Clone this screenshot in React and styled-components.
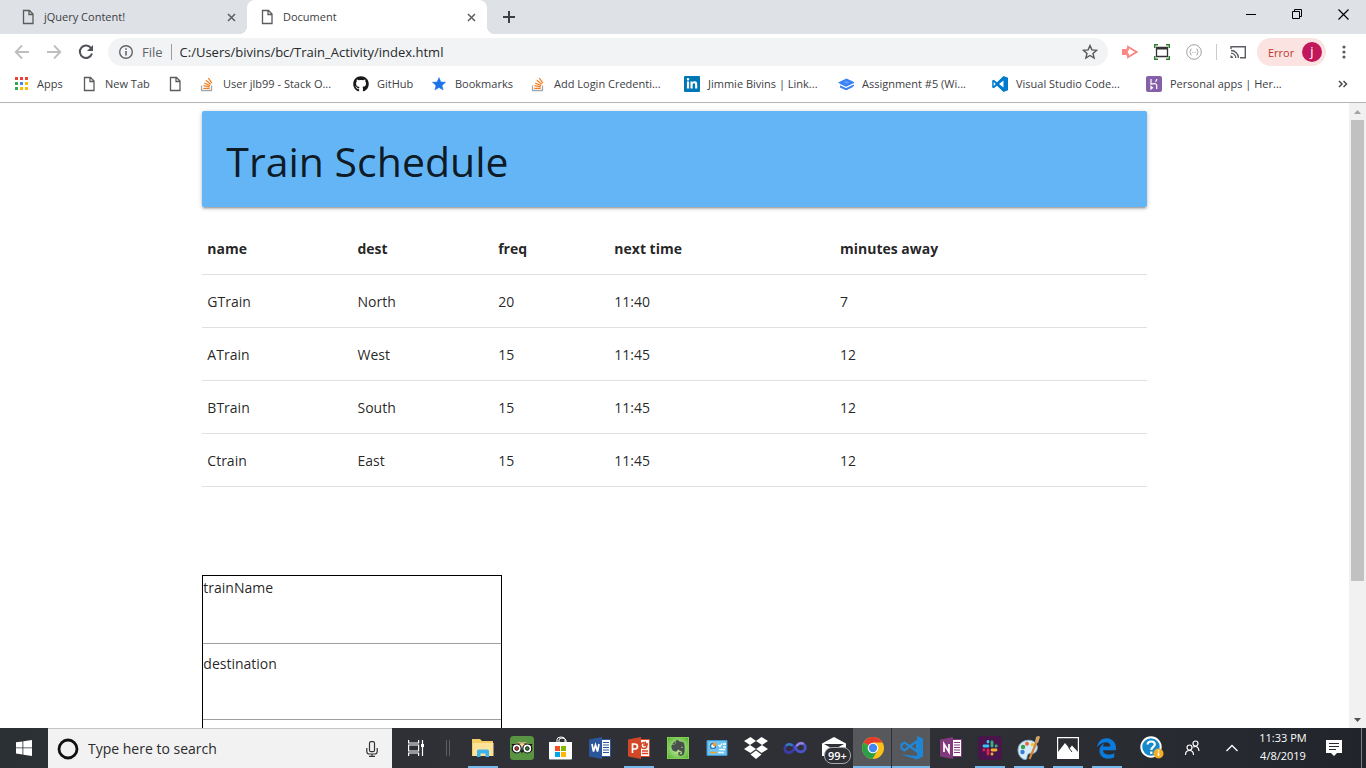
import React from "react";
import styled, { createGlobalStyle, css } from "styled-components";
import { FaGithub, FaLinkedinIn, FaEvernote } from "react-icons/fa";
import { FaEdgeLegacy } from "react-icons/fa6";

const GlobalStyle = createGlobalStyle`
  *, *::before, *::after { box-sizing: border-box; }
  body {
    margin: 0;
    font-family: "Open Sans", "Noto Sans", sans-serif;
    font-size: 11px;
    color: #3c4043;
    background: #fff;
  }
  button, input { font: inherit; color: inherit; margin: 0; }
  button { border: 0; padding: 0; background: none; }
  svg { display: block; flex: none; }
`;

const Screen = styled.div`
  display: flex;
  flex-direction: column;
  height: 100vh;
  overflow: hidden;
`;

/* ---------- tab strip ---------- */

const TabStrip = styled.div`
  display: flex;
  flex: none;
  height: 34px;
  background: #dee1e6;
`;

const Tab = styled.div`
  position: relative;
  display: flex;
  align-items: center;
  flex: 0 1 ${(p) => p.$width}px;
  padding: 0 8px 0 ${(p) => (p.$active ? 12 : 20)}px;
  gap: 8px;
  ${(p) =>
    p.$active &&
    css`
      background: #fff;
      border-radius: 8px 8px 0 0;
      &::before,
      &::after {
        content: "";
        position: absolute;
        bottom: 0;
        width: 8px;
        height: 8px;
      }
      &::before {
        left: -8px;
        background: radial-gradient(circle at 0 0, #dee1e6 8px, #fff 8px);
      }
      &::after {
        right: -8px;
        background: radial-gradient(circle at 100% 0, #dee1e6 8px, #fff 8px);
      }
    `}
`;

const TabTitle = styled.button`
  flex: 1;
  padding-bottom: 2px;
  text-align: left;
  white-space: nowrap;
`;

const IconButton = styled.button`
  display: flex;
  align-items: center;
  justify-content: center;
  flex: none;
  width: ${(p) => p.$width || 16}px;
  height: ${(p) => p.$height || 16}px;
`;

const WindowControls = styled.div`
  display: flex;
  margin-left: auto;
`;

/* ---------- toolbar ---------- */

const Toolbar = styled.div`
  display: flex;
  align-items: center;
  flex: none;
  height: 36px;
  padding: 0 10px 0 6px;
`;

const Omnibox = styled.div`
  display: flex;
  align-items: center;
  flex: 1;
  height: 28px;
  margin: 0 6px;
  padding: 0 10px;
  gap: 8px;
  border-radius: 14px;
  background: #f1f3f4;
  font-size: 13px;
  color: #5f6368;
`;

const UrlInput = styled.input`
  flex: 1;
  min-width: 0;
  padding: 0;
  border: 0;
  outline: 0;
  background: none;
  color: #27292c;
`;

const Divider = styled.span`
  flex: none;
  width: 1px;
  height: 16px;
  background: ${(p) => p.$color};
  margin: 0 ${(p) => p.$space || 0}px;
`;

const ProfilePill = styled.button`
  display: flex;
  align-items: center;
  justify-content: space-between;
  width: 69px;
  height: 28px;
  margin: 0 6px 0 4px;
  padding: 0 4px 0 11px;
  border-radius: 14px;
  background: #fae3e1;
  color: #c5362b;
`;

const Avatar = styled.span`
  width: 20px;
  height: 20px;
  border-radius: 50%;
  background: #c2185b;
  color: #fff;
  font-size: 13px;
  line-height: 18px;
`;

/* ---------- bookmarks ---------- */

const BookmarksBar = styled.nav`
  display: flex;
  align-items: center;
  flex: none;
  height: 33px;
  padding: 0 15px 4px 13px;
  border-bottom: 1px solid #b3b4b6;
`;

const Bookmark = styled.a`
  display: flex;
  align-items: center;
  gap: 8px;
  flex: 0 0 ${(p) => p.$width}px;
  height: 28px;
  color: #3c4043;
  text-decoration: none;
  white-space: nowrap;
`;

const BookmarkLabel = styled.span`
  padding-bottom: 2px;
`;

const MoreButton = styled(IconButton)`
  margin-left: auto;
`;

/* ---------- web page ---------- */

const Viewport = styled.div`
  display: flex;
  flex: 1;
  min-height: 0;
`;

const PageScroll = styled.div`
  flex: 1;
  overflow: hidden;
`;

const Container = styled.main`
  width: 70%;
  max-width: 1280px;
  margin: 0 auto;
  color: rgba(0, 0, 0, 0.87);
  font-size: 14px;
  line-height: 22px;
`;

const Banner = styled.header`
  margin: 8px 0 15px;
  padding: 24px 24px 20px;
  border-radius: 2px;
  background: #64b5f6;
  box-shadow: 0 2px 2px 0 rgba(0, 0, 0, 0.14), 0 3px 1px -2px rgba(0, 0, 0, 0.12),
    0 1px 5px 0 rgba(0, 0, 0, 0.2);
`;

const Title = styled.h1`
  margin: 0;
  font-size: 41px;
  line-height: 52px;
  font-weight: 400;
`;

const Schedule = styled.table`
  width: 100%;
  table-layout: fixed;
  border-collapse: collapse;
  margin-bottom: 88px;
`;

const Row = styled.tr`
  border-bottom: 1px solid rgba(0, 0, 0, 0.12);
`;

const HeadCell = styled.th`
  width: ${(p) => p.$width};
  padding: 16px 5px 14px;
  text-align: left;
  font-weight: 700;
`;

const Cell = styled.td`
  padding: 16px 5px 14px;
`;

const TrainForm = styled.form`
  width: 300px;
  border: 1px solid #000;
`;

const FieldLabel = styled.label`
  display: block;
  line-height: 24px;
`;

const FieldInput = styled.input`
  display: block;
  width: 100%;
  height: 44px;
  margin-bottom: 8px;
  border: 0;
  border-bottom: 1px solid #9e9e9e;
  outline: 0;
`;

const ScrollBar = styled.div`
  display: flex;
  flex-direction: column;
  align-items: center;
  width: 17px;
  background: #f1f1f1;
`;

const ScrollTrack = styled.div`
  display: flex;
  flex-direction: column;
  flex: 1;
`;

const ScrollThumb = styled.div`
  flex: 0 0 78%;
  width: 13px;
  background: #c1c1c1;
`;

/* ---------- taskbar ---------- */

const Taskbar = styled.footer`
  display: flex;
  align-items: stretch;
  flex: none;
  height: 40px;
  background: linear-gradient(90deg, #2b3035, #303136 40%, #2d2f34 75%, #21252b);
  color: #fff;
`;

const SearchBox = styled.label`
  display: flex;
  align-items: center;
  width: 344px;
  padding: 0 12px 0 8px;
  gap: 8px;
  border-top: 1px solid #c4c4c4;
  background: #f2f2f2;
  color: #2b2b2b;
`;

const SearchInput = styled.input`
  flex: 1;
  min-width: 0;
  padding: 0;
  border: 0;
  outline: 0;
  background: none;
  font-size: 14px;
  &::placeholder { color: #2b2b2b; opacity: 1; }
`;

const Apps = styled.div`
  display: flex;
  margin-left: 3px;
`;

const TaskButton = styled.button`
  display: flex;
  align-items: center;
  justify-content: center;
  position: relative;
  width: ${(p) => p.$width || 39}px;
  color: #fff;
  background: ${(p) => (p.$focused ? "#56585c" : "none")};
  box-shadow: ${(p) => (p.$focused ? "inset -1px 0 #303136" : "none")};
  &::after {
    content: "";
    display: ${(p) => (p.$running ? "block" : "none")};
    position: absolute;
    bottom: 0;
    left: ${(p) => (p.$focused ? 0 : 5)}px;
    right: ${(p) => (p.$focused ? 1 : 4)}px;
    height: 2px;
    background: #76b9ed;
  }
`;

const Tray = styled.div`
  display: flex;
  align-items: stretch;
  margin-left: auto;
  padding-right: 7px;
  border-right: 1px solid #7b7d80;
  margin-right: 4px;
`;

const Clock = styled.time`
  display: flex;
  flex-direction: column;
  justify-content: center;
  width: 62px;
  padding-bottom: 2px;
  text-align: center;
  line-height: 18px;
`;

const CountBadge = styled.span`
  position: absolute;
  left: 10px;
  top: 19px;
  padding: 0 3px;
  border: 1px solid #a5a7aa;
  border-radius: 8px;
  background: #303136;
  font-size: 11px;
  line-height: 15px;
  font-weight: 600;
`;

/* ---------- icons ---------- */

const Svg = ({ w = 16, h = w, box, children, ...rest }) => (
  <svg width={w} height={h} viewBox={box || `0 0 ${w} ${h}`} fill="none" aria-hidden="true" {...rest}>
    {children}
  </svg>
);

const PageIcon = () => (
  <Svg>
    <path d="M3.500 1.500h6l3.500 3.500v9.500h-9.500zM9 1.500v4h4" stroke="#5b5b5b" strokeWidth="1.300" />
  </Svg>
);
const CloseIcon = () => (
  <Svg w={9}><path d="M1 1l7 7M8 1L1 8" stroke="#5a5d61" strokeWidth="1.500" /></Svg>
);
const ArrowIcon = ({ flip }) => (
  <Svg transform={flip ? "scale(-1 1)" : undefined}>
    <path d="M15 8H2M8 1.500L1.700 8 8 14.500" stroke="#bcbec0" strokeWidth="1.800" />
  </Svg>
);
const ReloadIcon = () => (
  <Svg>
    <path d="M13.200 4.200A6.200 6.200 0 1 0 14 9.500" stroke="#505357" strokeWidth="2" />
    <path d="M15 1v6H9z" fill="#505357" />
  </Svg>
);
const InfoIcon = () => (
  <Svg>
    <circle cx="8" cy="8" r="6.300" stroke="#5f6368" strokeWidth="1.400" />
    <path d="M8 7v4.500M8 4.200v1.600" stroke="#5f6368" strokeWidth="1.600" />
  </Svg>
);
const StarIcon = ({ filled }) => (
  <Svg>
    <path
      d="M8 1.600l1.900 4.300 4.700.4-3.600 3.100 1.100 4.600L8 11.500 3.900 14 5 9.400 1.400 6.300l4.700-.4z"
      fill={filled ? "#1a73e8" : "none"}
      stroke={filled ? "#1a73e8" : "#55585c"}
      strokeWidth={filled ? 0.5 : 1.4}
    />
  </Svg>
);
const AppsIcon = () => {
  const colors = ["#ea4335", "#ea4335", "#ea4335", "#34a853", "#4285f4", "#fbbc05", "#34a853", "#fbbc05", "#fbbc05"];
  return (
    <Svg>
      {colors.map((c, i) => (
        <rect key={i} x={2 + (i % 3) * 5} y={1 + Math.floor(i / 3) * 5} width="3" height="3" fill={c} />
      ))}
    </Svg>
  );
};
const StackIcon = () => (
  <Svg>
    <path d="M2.500 9.500v5h10v-5" stroke="#a5a8ab" strokeWidth="1.300" />
    <path d="M4.300 12.300h6.400M4.400 9.700l6.300 1.200M5.200 7l5.800 2.700M6.800 4.300l4.900 4M9.300 2l3.600 5.200" stroke="#f48024" strokeWidth="1.300" />
  </Svg>
);
const LinkedInBox = styled.span`
  display: flex;
  align-items: center;
  justify-content: center;
  flex: none;
  width: 16px;
  height: 16px;
  border-radius: 1px;
  background: #0077b5;
  color: #fff;
`;
const LayersIcon = () => (
  <Svg>
    <path d="M0 6.500L8.500 2.500 16 6v4l-7.500 4L2 11V8z" fill="#3b82f6" />
    <path d="M0 7l8 3.700L16 7v1.500l-8 3.800L2 9.500z" fill="#fff" />
    <path d="M2 9.500l6 2.800 6.500-3v2L8 14.300 2 11.500z" fill="#3b82f6" />
    <path d="M5.500 6.300l3-1.300 3 1.300-3 1.500z" fill="#659df8" />
  </Svg>
);
const CodeIcon = () => (
  <Svg>
    <path d="M11.500 0L16 1.800v12.400L11.500 16 5 9.700 1.700 12.300.2 11.500V4.500l1.500-.8L5 6.300zM11.500 4.500L7 8l4.500 3.500zM1.700 6v4l2-2z" fill="#007acc" fillRule="evenodd" />
  </Svg>
);
const HerokuIcon = () => (
  <Svg>
    <rect width="16" height="16" rx="2" fill="#8560a8" />
    <path d="M5 3v5.300c2-.8 5.700-1.400 5.700 1V13M10.700 3c0 1-.5 2-1.200 2.800M5 10.500V13l1.500-1.300z" stroke="#fff" strokeWidth="1.200" />
  </Svg>
);
const PlayExtIcon = () => (
  <Svg>
    <path d="M0 5h4v6H0z" fill="#f98683" />
    <path d="M6 2.800L14.500 8 6 13.200V10.500H5V5.500h1z" stroke="#f98683" strokeWidth="1.800" />
  </Svg>
);
const CaptureIcon = () => (
  <Svg>
    <path d="M.7 4V.7H4M12 .7h3.300V4M15.300 12v3.300H12M4 15.300H.7V12" stroke="#2e8030" strokeWidth="1.500" />
    <path d="M2.500 3.500h11v9h-11z" stroke="#333" strokeWidth="1.300" />
    <path d="M2 3h12v2.500H2z" fill="#333" />
  </Svg>
);
const BracesIcon = () => (
  <Svg>
    <circle cx="8" cy="8" r="7.300" stroke="#a2a2a2" />
    <path d="M5.500 5c-1.500 0-.3 2.500-1.800 3 1.500.5.3 3 1.800 3M10.500 5c1.500 0 .3 2.500 1.800 3-1.500.5-.3 3-1.800 3M6.500 8.500h.8M8.700 8.500h.8" stroke="#999" />
  </Svg>
);
const CastIcon = () => (
  <Svg>
    <path d="M1 5V2.700h14.300v11H10" stroke="#5a5d61" strokeWidth="1.400" />
    <path d="M1 6.500A7.500 7.500 0 0 1 8.500 14M1 9.200A4.800 4.800 0 0 1 5.800 14" stroke="#5a5d61" strokeWidth="1.300" />
    <path d="M.5 11.500A2.500 2.500 0 0 1 3 14H.5z" fill="#5a5d61" />
  </Svg>
);
const DotsIcon = () => (
  <Svg>
    {[3, 8, 13].map((y) => <circle key={y} cx="8" cy={y} r="1.600" fill="#5a5d61" />)}
  </Svg>
);

const StartIcon = () => (
  <Svg>
    <path d="M0 2.300L6.500 1.400v6.100H0zM7.300 1.300L16 0v7.500H7.300zM0 8.300h6.500v6.200L0 13.600zM7.300 8.300H16V16l-8.700-1.300z" fill="#fff" />
  </Svg>
);
const CortanaIcon = () => (
  <Svg w={24}><circle cx="12" cy="12" r="9" stroke="#111" strokeWidth="2.800" /></Svg>
);
const MicIcon = () => (
  <Svg>
    <rect x="5.500" y=".7" width="5" height="10" rx="1.500" stroke="#333" strokeWidth="1.200" />
    <path d="M2.800 7v3.500q0 2.500 2.500 2.500h5.400q2.500 0 2.500-2.500V7M8 13v2.400M5 15.400h6" stroke="#333" strokeWidth="1.200" />
  </Svg>
);
const TaskViewIcon = () => (
  <Svg>
    <path d="M.6 0v3h10V0M.6 16v-3h10v3M.6 5h10v6H.6zM14.500 0v16" stroke="#fff" strokeWidth="1.200" />
    <path d="M13 4h3v3h-3z" fill="#fff" />
  </Svg>
);
const ExplorerIcon = () => (
  <Svg w={22}>
    <path d="M0 2h8l2 2h11v15H0z" fill="#f6cf63" />
    <path d="M1 6h20.500v13H1z" fill="#fde29a" />
    <path d="M5 20v-6q0-1.500 1.500-1.500h9q1.500 0 1.500 1.500v6h-3.500v-3.500h-5V20z" fill="#3cb3ec" />
  </Svg>
);
const OwlIcon = () => (
  <Svg w={24}>
    <rect width="24" height="24" rx="3.500" fill="#589442" />
    <path d="M4 8q8-4 16 0l-1 8-7-3-7 3z" fill="#f1d69b" />
    <path d="M1.500 8h5Q12 5.500 17.500 8h5L21 10.500 12 9l-9 1.500z" fill="#111" />
    <path d="M6 8.500q6-3 12 0l-6 3z" fill="#f1d69b" />
    {[6.700, 17.300].map((x, i) => (
      <g key={x}>
        <circle cx={x} cy="12.500" r="4.500" fill="#fff" stroke="#111" strokeWidth="1.200" />
        <circle cx={x} cy="12.500" r="1.800" fill={i ? "#318035" : "#d53c3c"} stroke="#111" />
      </g>
    ))}
    <path d="M10.500 14.500h3L12 17.500z" fill="#111" />
  </Svg>
);
const StoreIcon = () => (
  <Svg w={24}>
    <path d="M8 6V3.500Q8 1 12 1t4 2.500V6M10 6V4q0-2 3-2t4 2v2" stroke="#fff" />
    <path d="M0 6h23v16.500q0 1-1 1H1q-1 0-1-1z" fill="#fff" />
    <path d="M6 10h5v5H6z" fill="#f25022" /><path d="M12 10h5v5h-5z" fill="#7fba00" />
    <path d="M6 16h5v5H6z" fill="#00a4ef" /><path d="M12 16h5v5h-5z" fill="#ffb900" />
  </Svg>
);
const OfficeIcon = ({ color, mark, chart }) => (
  <Svg w={22}>
    <path d="M11 2.500h10.500v17H11z" fill="#fff" stroke={color} />
    {chart ? (
      <path d="M16 5.500a3 3 0 1 0 3 3h-3zM17.500 4.500V7H20M14 14h6M14 16.500h6" stroke={color} strokeWidth="1.300" />
    ) : (
      <path d="M14 5.500h6M14 8h6M14 10.500h6M14 13h6M14 15.500h6" stroke={color} strokeWidth="1.200" />
    )}
    <path d="M0 2.500L13 0v22L0 19.500z" fill={color} />
    <path d={mark} stroke="#fff" strokeWidth="1.700" />
  </Svg>
);
const EvernoteTile = styled.span`
  display: flex;
  align-items: center;
  justify-content: center;
  width: 22px;
  height: 22px;
  background: radial-gradient(#d6f5b4, #55b22f);
  border: 1px solid #83d050;
  color: #4a504c;
`;
const PanelIcon = () => (
  <Svg w={22}>
    <path d="M1 3.500h20v15H1z" fill="#6cc4f2" stroke="#3e94cd" />
    <circle cx="7" cy="9" r="3.700" fill="#fff" />
    <circle cx="7" cy="9" r="2.700" stroke="#287fc4" strokeWidth="1.700" />
    <path d="M7 9V5.300A3.700 3.700 0 0 1 10.700 9z" fill="#f39b26" />
    <path d="M12.500 8l1.500 1.500 2-3M17 7h3M17 10h3M13 12.500h6" stroke="#fff" strokeWidth="1.300" />
    <path d="M4 15.500h7" stroke="#f0a62e" strokeWidth="1.500" /><path d="M12 15.500h6" stroke="#e9f7ff" strokeWidth="1.500" />
  </Svg>
);
const DropboxIcon = () => (
  <Svg w={24}>
    <path d="M6.500 1L12 5 6 9 0 5zM17.500 1L24 5l-6 4-6-4zM0 13l6-4 6 4-5.500 4zM18 9l6 4-6.500 4-5.500-4zM6.500 18.500L12 14.500l5.500 4L12 23z" fill="#fff" />
  </Svg>
);
const InfinityIcon = () => (
  <Svg w={24}>
    <path d="M12 12c-3-4-5.500-4.500-8-3S1 14.500 3.500 16s5.500.5 8.500-4" stroke="#403aa8" strokeWidth="2.800" />
    <path d="M12 12c3-4.500 6-5.500 8.500-4s2.500 5.500 0 7-5.500 1-8.500-3" stroke="#4b54c9" strokeWidth="2.800" />
    <path d="M13.500 10c2.500-3 5-3.500 7-2" stroke="#9b84dc" strokeWidth="2.200" />
    <path d="M3 9.800c2-2 4.500-1.800 6.500-.3" stroke="#2f7fb8" strokeWidth="2.200" />
  </Svg>
);
const MailIcon = () => (
  <Svg w={24}>
    <path d="M0 7.500L12 1l12 6.500V20H0z" fill="#fff" />
    <path d="M2 8h20l-10 5.500z" fill="#303136" />
  </Svg>
);
const ChromeIcon = () => (
  <Svg w={22}>
    <circle cx="11" cy="11" r="11" fill="#fbc116" />
    <path d="M11 11L1.500 5.500A11 11 0 0 1 20.500 5.500H11z" fill="#e33b2e" />
    <path d="M1.500 5.500A11 11 0 0 0 10.500 22l5-8.500L6.500 14z" fill="#2a9f48" />
    <path d="M1.500 5.500l4.800 8.300L11 11z" fill="#2a9f48" />
    <circle cx="11" cy="11" r="5.300" fill="#fff" />
    <circle cx="11" cy="11" r="4.200" fill="#4285f4" />
  </Svg>
);
const CodeTaskIcon = () => (
  <Svg w={24}>
    <path d="M1 18.500l16 1.500V0l6 2.500v18L17 23.500z" fill="#1f86d6" />
    <path d="M17 5v10.500L4.500 6.500 1.500 8.500v4l3 2L17 5" stroke="#2188d8" strokeWidth="2.200" />
  </Svg>
);
const SlackIcon = () => (
  <Svg w={24}>
    <rect width="24" height="24" rx="4" fill="#4a154b" />
    <g strokeWidth="2.800" strokeLinecap="round">
      <path d="M6 10h4M10 5.500V6" stroke="#36c5f0" />
      <path d="M14 6v4M18 10h.3" stroke="#2eb67d" />
      <path d="M14 14h4M14 18v.2" stroke="#ecb22e" />
      <path d="M10 14v4M6 14h-.2" stroke="#e01e5a" />
    </g>
  </Svg>
);
const PaintIcon = () => (
  <Svg w={24}>
    <path d="M1 14C1 7 8 3 14 4.500s8 7 5 11-6 0-8 3 0 5-3 5-7-4-7-9.500z" fill="#d6ebf8" stroke="#87aec8" />
    <circle cx="6" cy="11" r="2.200" fill="#3a9d49" /><circle cx="10" cy="7.800" r="2" fill="#e9653c" />
    <circle cx="15.500" cy="8.500" r="1.800" fill="#efc22f" /><circle cx="5.500" cy="16" r="2.200" fill="#397bd1" />
    <path d="M20 5l-7.500 18" stroke="#d18336" strokeWidth="2.200" />
    <path d="M18 6l1-5q3-2 4 0l-2 6z" fill="#cfa66a" />
  </Svg>
);
const PhotosIcon = () => (
  <Svg w={22}>
    <path d="M.6.600h20.800v20.800H.6z" stroke="#fff" strokeWidth="1.200" />
    <path d="M1 15l7-9 4.500 5.500L15 8.500l6 6.500v6.500H1z" fill="#fff" />
    <path d="M11.500 10.500l3.500 4.500" stroke="#303136" />
  </Svg>
);
const HelpIcon = () => (
  <Svg w={24}>
    <circle cx="11" cy="11" r="9.700" fill="#1689ca" stroke="#fff" strokeWidth="2" />
    <path d="M7.500 8.500q.3-3 3.800-3t3.500 3c0 2.300-3.500 2.500-3.500 5.500M11.300 15.500V18" stroke="#fff" strokeWidth="2.200" />
    <circle cx="18.500" cy="17.500" r="5" fill="#f4ae26" />
    <path d="M18.500 16.500V20M18.500 14v1.500" stroke="#fff" strokeWidth="1.500" />
  </Svg>
);
const PeopleIcon = () => (
  <Svg>
    <circle cx="5.500" cy="7.500" r="2.500" stroke="#fff" strokeWidth="1.200" />
    <circle cx="11.500" cy="3.500" r="2.500" stroke="#fff" strokeWidth="1.200" />
    <path d="M1.500 15q0-4.500 4-4.500T9.500 15M9 7q5.500-2 6 4" stroke="#fff" strokeWidth="1.200" />
  </Svg>
);
const NoteIcon = () => (
  <Svg>
    <path d="M0 0h16v13h-5l-3 3-3-3H0z" fill="#fff" />
    <path d="M3 3.500h10M3 6.500h10M3 9.500h7" stroke="#26292f" strokeWidth="1.200" />
  </Svg>
);
const ScrollArrow = ({ down }) => (
  <Svg w={17}>
    <path d={down ? "M5 7h7l-3.500 4z" : "M5 11h7L8.500 7z"} fill={down ? "#505050" : "#a3a3a3"} />
  </Svg>
);

/* ---------- data ---------- */

const bookmarks = [
  { label: "Apps", icon: <AppsIcon />, width: 68 },
  { label: "New Tab", icon: <PageIcon />, width: 86 },
  { label: "", icon: <PageIcon />, width: 32 },
  { label: "User jlb99 - Stack O...", icon: <StackIcon />, width: 154 },
  { label: "GitHub", icon: <FaGithub size={16} color="#191717" />, width: 78 },
  { label: "Bookmarks", icon: <StarIcon filled />, width: 99 },
  { label: "Add Login Credenti...", icon: <StackIcon />, width: 154 },
  { label: "Jimmie Bivins | Link...", icon: <LinkedInBox><FaLinkedinIn size={12} /></LinkedInBox>, width: 154 },
  { label: "Assignment #5 (Wi...", icon: <LayersIcon />, width: 154 },
  { label: "Visual Studio Code...", icon: <CodeIcon />, width: 154 },
  { label: "Personal apps | Her...", icon: <HerokuIcon />, width: 154 },
];

const columns = [
  ["name", "15.9%"],
  ["dest", "14.9%"],
  ["freq", "12.3%"],
  ["next time", "23.9%"],
  ["minutes away", "33%"],
];

const trains = [
  ["GTrain", "North", "20", "11:40", "7"],
  ["ATrain", "West", "15", "11:45", "12"],
  ["BTrain", "South", "15", "11:45", "12"],
  ["Ctrain", "East", "15", "11:45", "12"],
];

const apps = [
  { name: "File Explorer", icon: <ExplorerIcon />, running: true },
  { name: "TripAdvisor", icon: <OwlIcon /> },
  { name: "Store", icon: <StoreIcon /> },
  { name: "Word", icon: <OfficeIcon color="#2b579a" mark="M3 7l1.500 7.500L6.500 8l2 6.500L10 7" /> },
  { name: "PowerPoint", icon: <OfficeIcon color="#d24726" chart mark="M4.500 16V7h2q3 0 3 2.500T6.500 12h-2" />, running: true },
  { name: "Evernote", icon: <EvernoteTile><FaEvernote size={18} /></EvernoteTile> },
  { name: "Control Panel", icon: <PanelIcon /> },
  { name: "Dropbox", icon: <DropboxIcon /> },
  { name: "Visual Studio", icon: <InfinityIcon /> },
  { name: "Mail", icon: <MailIcon />, badge: "99+" },
  { name: "Chrome", icon: <ChromeIcon />, running: true, focused: true },
  { name: "Visual Studio Code", icon: <CodeTaskIcon />, running: true, focused: true },
  { name: "OneNote", icon: <OfficeIcon color="#80397b" mark="M4 15V7l5 8V7" /> },
  { name: "Slack", icon: <SlackIcon />, running: true },
  { name: "Paint", icon: <PaintIcon />, running: true },
  { name: "Photos", icon: <PhotosIcon />, running: true },
  { name: "Edge", icon: <FaEdgeLegacy size={21} color="#0a7bdb" />, running: true },
];

export default function App() {
  return (
    <Screen>
      <GlobalStyle />
      <TabStrip>
        <Tab $width={247}>
          <PageIcon />
          <TabTitle>jQuery Content!</TabTitle>
          <IconButton aria-label="Close tab"><CloseIcon /></IconButton>
        </Tab>
        <Tab $width={240} $active>
          <PageIcon />
          <TabTitle>Document</TabTitle>
          <IconButton aria-label="Close tab"><CloseIcon /></IconButton>
        </Tab>
        <IconButton $width={44} $height={34} aria-label="New tab">
          <Svg w={12}><path d="M6 0v12M0 6h12" stroke="#3c4043" strokeWidth="2" /></Svg>
        </IconButton>
        <WindowControls>
          <IconButton $width={46} $height={28} aria-label="Minimize">
            <Svg w={10}><path d="M0 5.500h10" stroke="#000" /></Svg>
          </IconButton>
          <IconButton $width={46} $height={28} aria-label="Restore">
            <Svg w={10}><path d="M.5 2.500h7v7h-7zM2.500 2.500v-2h7v7h-2" stroke="#000" /></Svg>
          </IconButton>
          <IconButton $width={46} $height={28} aria-label="Close">
            <Svg w={11}><path d="M.5.500l10 10M10.500.500l-10 10" stroke="#000" strokeWidth="1.200" /></Svg>
          </IconButton>
        </WindowControls>
      </TabStrip>

      <Toolbar>
        <IconButton $width={32} $height={28} aria-label="Back"><ArrowIcon /></IconButton>
        <IconButton $width={32} $height={28} aria-label="Forward"><ArrowIcon flip /></IconButton>
        <IconButton $width={32} $height={28} aria-label="Reload"><ReloadIcon /></IconButton>
        <Omnibox>
          <InfoIcon />
          <span>File</span>
          <Divider $color="#9a9da1" />
          <UrlInput aria-label="Address" defaultValue="C:/Users/bivins/bc/Train_Activity/index.html" />
          <IconButton aria-label="Bookmark this page"><StarIcon /></IconButton>
        </Omnibox>
        <IconButton $width={32} $height={28} aria-label="Screencast extension"><PlayExtIcon /></IconButton>
        <IconButton $width={32} $height={28} aria-label="Capture extension"><CaptureIcon /></IconButton>
        <IconButton $width={32} $height={28} aria-label="JSON extension"><BracesIcon /></IconButton>
        <Divider $color="#c9cbce" $space={6} />
        <IconButton $width={30} $height={28} aria-label="Cast"><CastIcon /></IconButton>
        <ProfilePill>
          Error
          <Avatar>j</Avatar>
        </ProfilePill>
        <IconButton $width={24} $height={28} aria-label="Menu"><DotsIcon /></IconButton>
      </Toolbar>

      <BookmarksBar>
        {bookmarks.map((b, i) => (
          <Bookmark key={i} href="#" $width={b.width} aria-label={b.label || "Page"}>
            {b.icon}
            {b.label && <BookmarkLabel>{b.label}</BookmarkLabel>}
          </Bookmark>
        ))}
        <MoreButton aria-label="More bookmarks">
          <Svg w={10}><path d="M1 2l3 3-3 3M5.500 2l3 3-3 3" stroke="#4b4e52" strokeWidth="1.500" /></Svg>
        </MoreButton>
      </BookmarksBar>

      <Viewport>
        <PageScroll>
          <Container>
            <Banner><Title>Train Schedule</Title></Banner>
            <Schedule>
              <thead>
                <Row>
                  {columns.map(([name, width]) => (
                    <HeadCell key={name} $width={width}>{name}</HeadCell>
                  ))}
                </Row>
              </thead>
              <tbody>
                {trains.map((train) => (
                  <Row key={train[0]}>
                    {train.map((value, i) => <Cell key={i}>{value}</Cell>)}
                  </Row>
                ))}
              </tbody>
            </Schedule>
            <TrainForm>
              <FieldLabel htmlFor="trainName">trainName</FieldLabel>
              <FieldInput id="trainName" />
              <FieldLabel htmlFor="destination">destination</FieldLabel>
              <FieldInput id="destination" />
            </TrainForm>
          </Container>
        </PageScroll>
        <ScrollBar>
          <ScrollArrow />
          <ScrollTrack><ScrollThumb /></ScrollTrack>
          <ScrollArrow down />
        </ScrollBar>
      </Viewport>

      <Taskbar>
        <TaskButton $width={48} aria-label="Start"><StartIcon /></TaskButton>
        <SearchBox>
          <CortanaIcon />
          <SearchInput placeholder="Type here to search" aria-label="Search" />
          <MicIcon />
        </SearchBox>
        <TaskButton $width={48} aria-label="Task view"><TaskViewIcon /></TaskButton>
        <TaskButton $width={20} as="span">
          <Svg><path d="M4.500 0v16M7.500 0v16" stroke="#5c5e62" /></Svg>
        </TaskButton>
        <Apps>
          {apps.map((app) => (
            <TaskButton key={app.name} aria-label={app.name} $running={app.running} $focused={app.focused}>
              {app.icon}
              {app.badge && <CountBadge>{app.badge}</CountBadge>}
            </TaskButton>
          ))}
        </Apps>
        <Tray>
          <TaskButton $width={40} aria-label="Help"><HelpIcon /></TaskButton>
          <TaskButton $width={40} aria-label="People"><PeopleIcon /></TaskButton>
          <TaskButton $width={40} aria-label="Show hidden icons">
            <Svg w={12}><path d="M.5 9L6 3.500 11.500 9" stroke="#fff" strokeWidth="1.300" /></Svg>
          </TaskButton>
          <Clock>
            <span>11:33 PM</span>
            <span>4/8/2019</span>
          </Clock>
          <TaskButton $width={40} aria-label="Notifications"><NoteIcon /></TaskButton>
        </Tray>
      </Taskbar>
    </Screen>
  );
}
